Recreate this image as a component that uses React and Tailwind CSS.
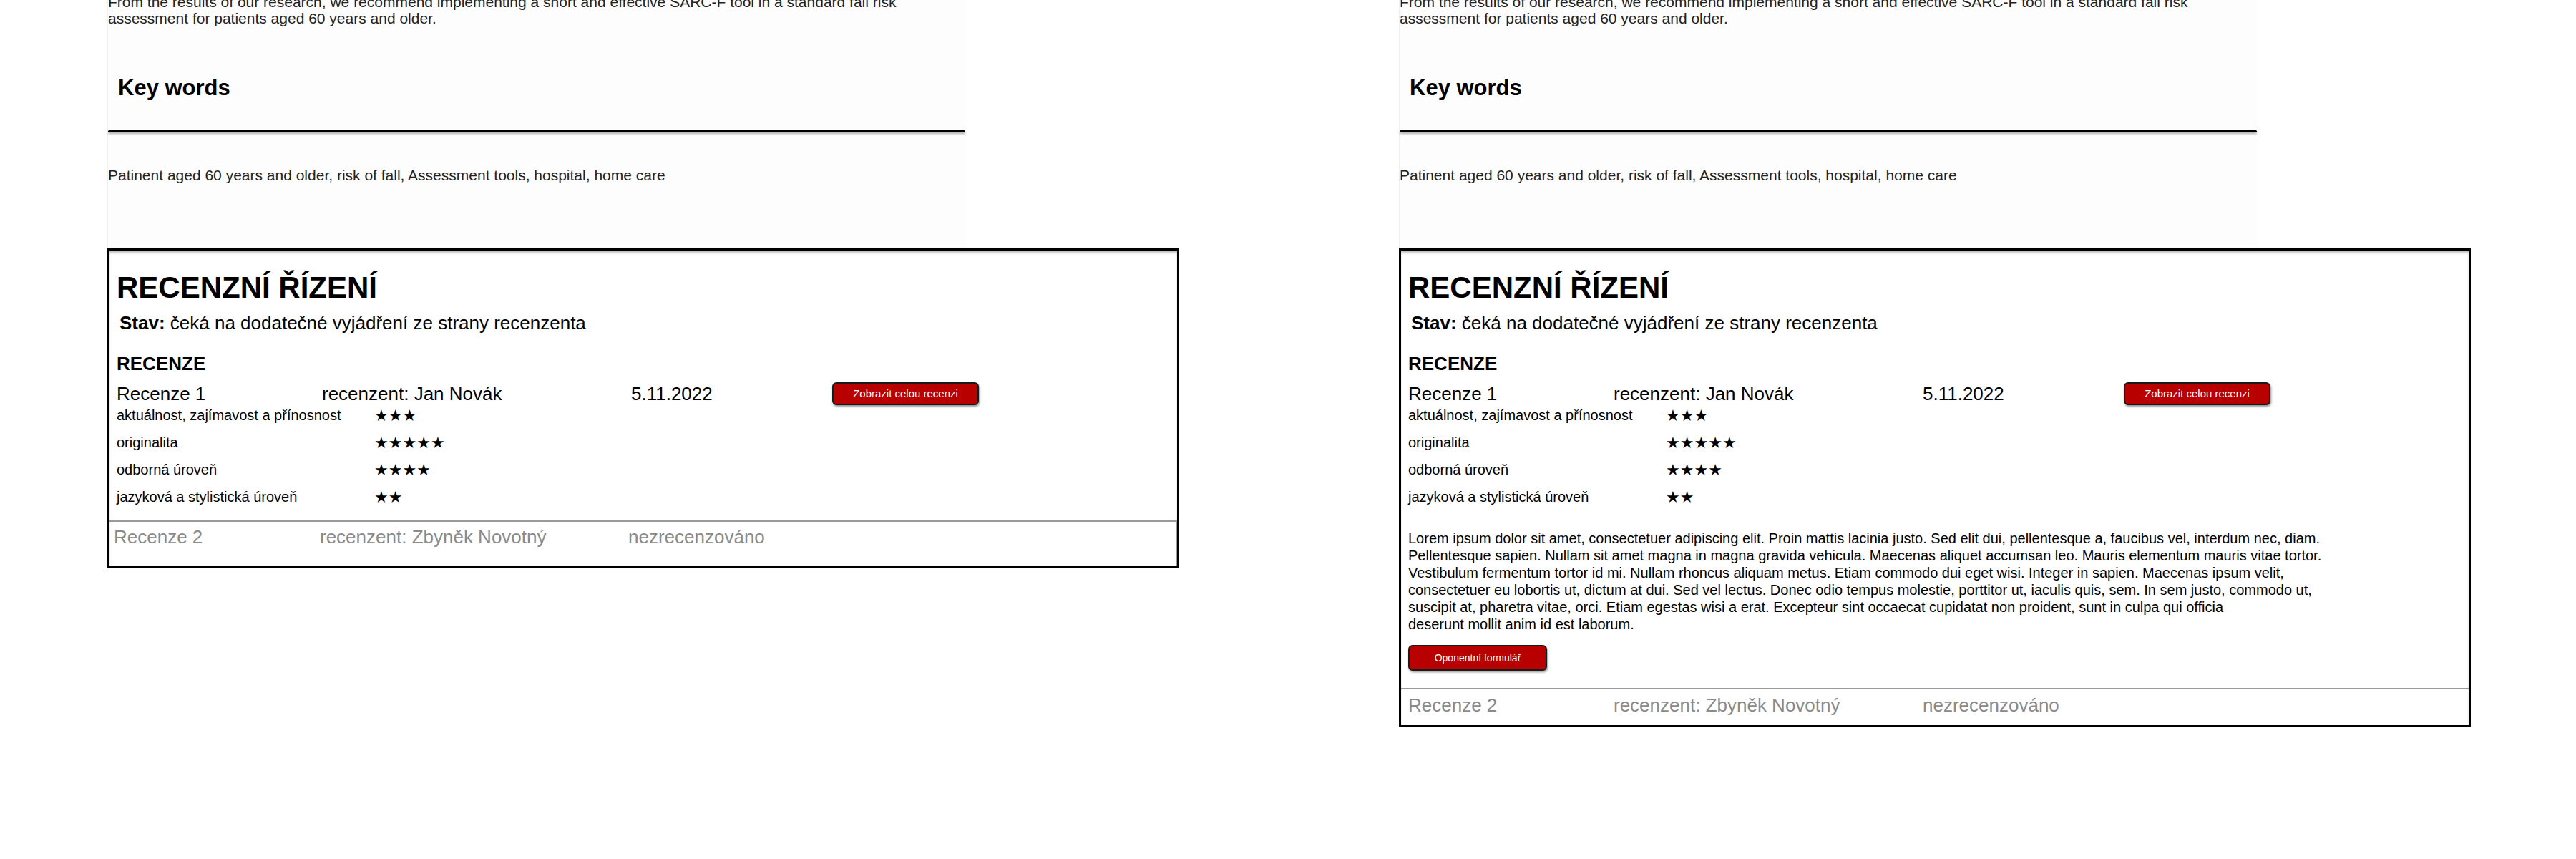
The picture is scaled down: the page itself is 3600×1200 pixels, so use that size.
import React from 'react'

const criteria = [
  { label: 'aktuálnost, zajímavost a přínosnost', stars: 3 },
  { label: 'originalita', stars: 5 },
  { label: 'odborná úroveň', stars: 4 },
  { label: 'jazyková a stylistická úroveň', stars: 2 },
]

const lorem = [
  'Lorem ipsum dolor sit amet, consectetuer adipiscing elit. Proin mattis lacinia justo. Sed elit dui, pellentesque a, faucibus vel, interdum nec, diam.',
  'Pellentesque sapien. Nullam sit amet magna in magna gravida vehicula. Maecenas aliquet accumsan leo. Mauris elementum mauris vitae tortor.',
  'Vestibulum fermentum tortor id mi. Nullam rhoncus aliquam metus. Etiam commodo dui eget wisi. Integer in sapien. Maecenas ipsum velit,',
  'consectetuer eu lobortis ut, dictum at dui. Sed vel lectus. Donec odio tempus molestie, porttitor ut, iaculis quis, sem. In sem justo, commodo ut,',
  'suscipit at, pharetra vitae, orci. Etiam egestas wisi a erat. Excepteur sint occaecat cupidatat non proident, sunt in culpa qui officia',
  'deserunt mollit anim id est laborum.',
]

function RedButton({ children, className }) {
  return (
    <button
      className={
        'flex items-center justify-center rounded-[6px] border-2 border-[#1a1a1a] bg-[#b80000] text-white shadow-[1px_2px_3px_rgba(0,0,0,0.45)] ' +
        className
      }
    >
      {children}
    </button>
  )
}

function Abstract() {
  return (
    <div className="w-[1200px] border-l border-[#f0f0f0] bg-[#fdfdfd] pb-[91px]">
      <p className="-mt-[9px] text-[21px] leading-[23px] text-[#222]">
        From the results of our research, we recommend implementing a short and effective SARC-F tool in a standard fall risk
        <br />
        assessment for patients aged 60 years and older.
      </p>
      <h2 className="mt-[69px] ml-[14px] text-[31px] font-bold leading-[34px] text-black">Key words</h2>
      <div className="mt-[42px] h-[3px] w-[1198px] rounded-full bg-black shadow-[0_2px_3px_rgba(0,0,0,0.35)]" />
      <p className="mt-[48px] text-[21px] leading-[23px] text-[#222]">
        Patinent aged 60 years and older, risk of fall, Assessment tools, hospital, home care
      </p>
    </div>
  )
}

function ReviewBox({ expanded }) {
  return (
    <div className="w-[1498px] border-[3px] border-black bg-white shadow-[inset_0_4px_4px_-2px_rgba(0,0,0,0.4)]">
      <div className="pl-[10px] pt-[28px]">
        <h1 className="text-[42px] font-bold leading-[48px] text-black">RECENZNÍ ŘÍZENÍ</h1>
        <p className="mt-[10px] ml-[4px] text-[26px] leading-[30px] text-black">
          <span className="font-bold">Stav:</span> čeká na dodatečné vyjádření ze strany recenzenta
        </p>
        <h3 className="mt-[27px] text-[26px] font-bold leading-[30px] text-black">RECENZE</h3>

        <div className="mt-[11px] flex h-[32px] items-center text-[26px] leading-[28px] text-black">
          <span className="w-[287px]">Recenze 1</span>
          <span className="w-[432px]">recenzent: Jan Novák</span>
          <span className="w-[281px]">5.11.2022</span>
          <RedButton className="h-[32px] w-[205px] text-[15px]">Zobrazit celou recenzi</RedButton>
        </div>

        <div className="mt-[3px] flex flex-col gap-[15px]">
          {criteria.map((c) => (
            <div key={c.label} className="flex text-[20px] leading-[23px] text-black">
              <span className="w-[360px]">{c.label}</span>
              <span className="text-[22px] leading-[23px]" style={{ fontFamily: '"DejaVu Sans", sans-serif' }}>
                {'★'.repeat(c.stars)}
              </span>
            </div>
          ))}
        </div>

        {expanded && (
          <div className="pb-[24px]">
            <p className="mt-[34px] text-[20px] leading-[24px] text-black">
              {lorem.map((line, i) => (
                <React.Fragment key={i}>
                  {line}
                  {i < lorem.length - 1 && <br />}
                </React.Fragment>
              ))}
            </p>
            <RedButton className="mt-[17px] h-[36px] w-[194px] text-[14px]">Oponentní formulář</RedButton>
          </div>
        )}
      </div>

      {expanded ? (
        <div className="flex border-t-2 border-[#999] pl-[10px] pt-[7px] pb-[13px] text-[26px] leading-[30px] text-[#8a8a8a]">
          <span className="w-[287px]">Recenze 2</span>
          <span className="w-[432px]">recenzent: Zbyněk Novotný</span>
          <span>nezrecenzováno</span>
        </div>
      ) : (
        <div className="mt-[21px] flex border-t-2 border-r-2 border-[#999] pl-[6px] pt-[6px] pb-[25px] text-[26px] leading-[30px] text-[#8a8a8a]">
          <span className="w-[288px]">Recenze 2</span>
          <span className="w-[431px]">recenzent: Zbyněk Novotný</span>
          <span>nezrecenzováno</span>
        </div>
      )}
    </div>
  )
}

function Page({ expanded }) {
  return (
    <div className="flex flex-col">
      <Abstract />
      <ReviewBox expanded={expanded} />
    </div>
  )
}

export default function App() {
  return (
    <div
      className="flex h-[1200px] w-[3600px] overflow-hidden bg-white"
      style={{ fontFamily: '"Liberation Sans", Arial, sans-serif' }}
    >
      <div className="w-[1800px] pl-[150px]">
        <Page expanded={false} />
      </div>
      <div className="w-[1800px] pl-[155px]">
        <Page expanded />
      </div>
    </div>
  )
}
